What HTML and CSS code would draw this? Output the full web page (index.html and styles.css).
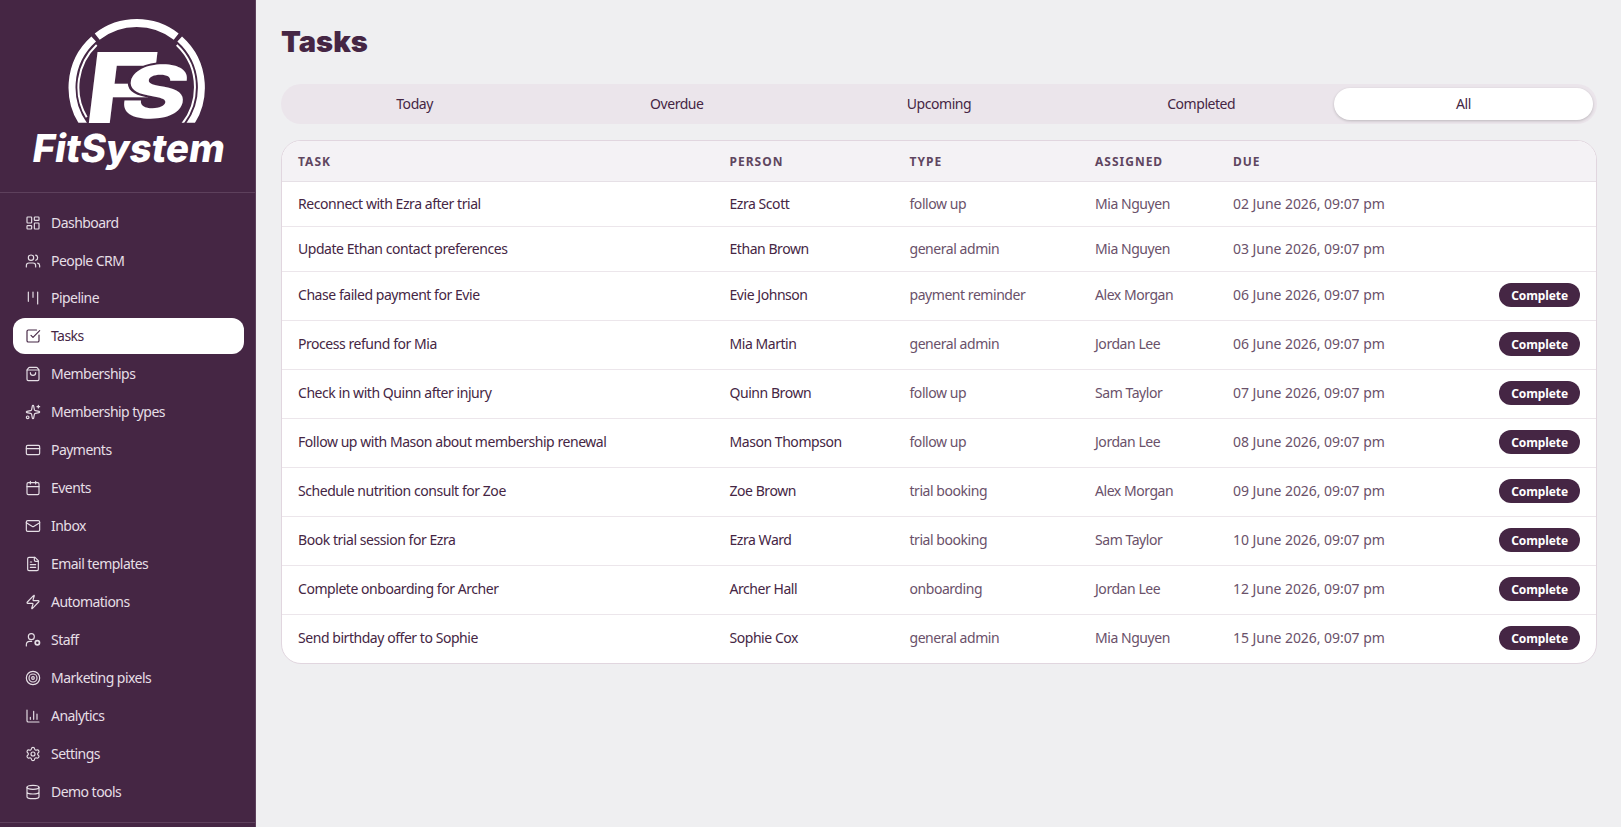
FILE: index.html
```html
<!DOCTYPE html>
<html lang="en">
<head>
    <meta charset="UTF-8">
    <meta name="viewport" content="width=device-width, initial-scale=1.0">
    <title>Tasks - FitSystem</title>
    <link rel="stylesheet" href="styles.css">
</head>
<body>
    <div class="app">
        <aside class="sidebar">
            <div class="brand">
                <svg class="logo" viewBox="0 0 255 192" role="img" aria-label="FitSystem">
                    <clipPath id="ring-cut"><rect x="0" y="0" width="255" height="122.7"/></clipPath>
                    <g clip-path="url(#ring-cut)" fill="none" stroke="#fff">
                        <path stroke-width="8" d="M97.2 36.6A64.3 64.3 0 0 1 176.2 36.6"/>
                        <path stroke-width="7" d="M93.7 39A64.7 64.7 0 0 0 87.5 129.3M179.7 39A64.7 64.7 0 0 1 185.9 129.3"/>
                        <path stroke-width="2" d="M96.7 44.9A58.3 58.3 0 0 0 86.7 117.3M176.7 44.9A58.3 58.3 0 0 1 177.1 129.3"/>
                    </g>
                    <text class="logo-f" transform="translate(82 122.5) skewX(-7) scale(1.24 1)">F</text>
                    <text class="logo-s" transform="translate(117 117.5) skewX(-13) scale(1.36 1)">S</text>
                    <text class="logo-name" transform="translate(31 162) skewX(-9)" x="0" y="0" textLength="192" lengthAdjust="spacingAndGlyphs">FitSystem</text>
                </svg>
            </div>
            <nav class="nav">
                <a class="nav-item"><svg class="icon" viewBox="0 0 24 24"><rect width="7" height="9" x="3" y="3" rx="1"/><rect width="7" height="5" x="14" y="3" rx="1"/><rect width="7" height="9" x="14" y="12" rx="1"/><rect width="7" height="5" x="3" y="16" rx="1"/></svg>Dashboard</a>
                <a class="nav-item"><svg class="icon" viewBox="0 0 24 24"><path d="M16 21v-2a4 4 0 0 0-4-4H6a4 4 0 0 0-4 4v2"/><circle cx="9" cy="7" r="4"/><path d="M22 21v-2a4 4 0 0 0-3-3.87M16 3.13a4 4 0 0 1 0 7.75"/></svg>People CRM</a>
                <a class="nav-item"><svg class="icon" viewBox="0 0 24 24"><path d="M5 3v14M12 3v8M19 3v18"/></svg>Pipeline</a>
                <a class="nav-item active"><svg class="icon" viewBox="0 0 24 24"><path d="M21 10.656V19a2 2 0 0 1-2 2H5a2 2 0 0 1-2-2V5a2 2 0 0 1 2-2h12.344"/><path d="m9 11 3 3L22 4"/></svg>Tasks</a>
                <a class="nav-item"><svg class="icon" viewBox="0 0 24 24"><path d="M16 10a4 4 0 0 1-8 0M3.103 6.034h17.794"/><path d="M3.4 5.467a2 2 0 0 0-.4 1.2V20a2 2 0 0 0 2 2h14a2 2 0 0 0 2-2V6.667a2 2 0 0 0-.4-1.2l-2-2.667A2 2 0 0 0 17 2H7a2 2 0 0 0-1.6.8z"/></svg>Memberships</a>
                <a class="nav-item"><svg class="icon" viewBox="0 0 24 24"><path d="M11.017 2.814a1 1 0 0 1 1.966 0l1.051 5.558a2 2 0 0 0 1.594 1.594l5.558 1.051a1 1 0 0 1 0 1.966l-5.558 1.051a2 2 0 0 0-1.594 1.594l-1.051 5.558a1 1 0 0 1-1.966 0l-1.051-5.558a2 2 0 0 0-1.594-1.594l-5.558-1.051a1 1 0 0 1 0-1.966l5.558-1.051a2 2 0 0 0 1.594-1.594z"/><path d="M20 2v4M22 4h-4"/><circle cx="4" cy="20" r="2"/></svg>Membership types</a>
                <a class="nav-item"><svg class="icon" viewBox="0 0 24 24"><rect width="20" height="14" x="2" y="5" rx="2"/><path d="M2 10h20"/></svg>Payments</a>
                <a class="nav-item"><svg class="icon" viewBox="0 0 24 24"><path d="M8 2v4M16 2v4"/><rect width="18" height="18" x="3" y="4" rx="2"/><path d="M3 10h18"/></svg>Events</a>
                <a class="nav-item"><svg class="icon" viewBox="0 0 24 24"><path d="m22 7-8.991 5.727a2 2 0 0 1-2.009 0L2 7"/><rect width="20" height="16" x="2" y="4" rx="2"/></svg>Inbox</a>
                <a class="nav-item"><svg class="icon" viewBox="0 0 24 24"><path d="M15 2H6a2 2 0 0 0-2 2v16a2 2 0 0 0 2 2h12a2 2 0 0 0 2-2V7z"/><path d="M14 2v4a2 2 0 0 0 2 2h4M10 9H8M16 13H8M16 17H8"/></svg>Email templates</a>
                <a class="nav-item"><svg class="icon" viewBox="0 0 24 24"><path d="M4 14a1 1 0 0 1-.78-1.63l9.9-10.2a.5.5 0 0 1 .86.46l-1.92 6.02A1 1 0 0 0 13 10h7a1 1 0 0 1 .78 1.63l-9.9 10.2a.5.5 0 0 1-.86-.46l1.92-6.02A1 1 0 0 0 11 14z"/></svg>Automations</a>
                <a class="nav-item"><svg class="icon" viewBox="0 0 24 24"><path d="M2 21v-2a5 5 0 0 1 5-5h3"/><circle cx="9.5" cy="7" r="4.5"/><circle cx="18.5" cy="16" r="3.2" stroke-width="2.6"/></svg>Staff</a>
                <a class="nav-item"><svg class="icon" viewBox="0 0 24 24"><circle cx="12" cy="12" r="10"/><circle cx="12" cy="12" r="6"/><circle cx="12" cy="12" r="2"/></svg>Marketing pixels</a>
                <a class="nav-item"><svg class="icon" viewBox="0 0 24 24"><path d="M3 3v16a2 2 0 0 0 2 2h16M18 17V9M13 17V5M8 17v-3"/></svg>Analytics</a>
                <a class="nav-item"><svg class="icon" viewBox="0 0 24 24"><path d="M9.671 4.136a2.34 2.34 0 0 1 4.659 0 2.34 2.34 0 0 0 3.319 1.915 2.34 2.34 0 0 1 2.33 4.033 2.34 2.34 0 0 0 0 3.831 2.34 2.34 0 0 1-2.33 4.033 2.34 2.34 0 0 0-3.319 1.915 2.34 2.34 0 0 1-4.659 0 2.34 2.34 0 0 0-3.32-1.915 2.34 2.34 0 0 1-2.33-4.033 2.34 2.34 0 0 0 0-3.831A2.34 2.34 0 0 1 6.35 6.051a2.34 2.34 0 0 0 3.319-1.915"/><circle cx="12" cy="12" r="3"/></svg>Settings</a>
                <a class="nav-item"><svg class="icon" viewBox="0 0 24 24"><ellipse cx="12" cy="5" rx="9" ry="3"/><path d="M3 5v14a9 3 0 0 0 18 0V5M3 12a9 3 0 0 0 18 0"/></svg>Demo tools</a>
            </nav>
            <div class="sidebar-footer"></div>
        </aside>

        <main class="main">
            <h1>Tasks</h1>
            <div class="tabs">
                <a class="tab">Today</a>
                <a class="tab">Overdue</a>
                <a class="tab">Upcoming</a>
                <a class="tab">Completed</a>
                <a class="tab active">All</a>
            </div>
            <div class="card">
                <table class="tasks">
                    <colgroup>
                        <col class="col-task">
                        <col class="col-person">
                        <col class="col-type">
                        <col class="col-assigned">
                        <col>
                        <col class="col-action">
                    </colgroup>
                    <thead>
                        <tr><th>Task</th><th>Person</th><th>Type</th><th>Assigned</th><th>Due</th><th></th></tr>
                    </thead>
                    <tbody>
                        <tr class="done"><td>Reconnect with Ezra after trial</td><td>Ezra Scott</td><td class="muted">follow up</td><td class="muted">Mia Nguyen</td><td class="muted date">02 June 2026, 09:07 pm</td><td></td></tr>
                        <tr class="done"><td>Update Ethan contact preferences</td><td>Ethan Brown</td><td class="muted">general admin</td><td class="muted">Mia Nguyen</td><td class="muted date">03 June 2026, 09:07 pm</td><td></td></tr>
                        <tr><td>Chase failed payment for Evie</td><td>Evie Johnson</td><td class="muted">payment reminder</td><td class="muted">Alex Morgan</td><td class="muted date">06 June 2026, 09:07 pm</td><td><button class="btn">Complete</button></td></tr>
                        <tr><td>Process refund for Mia</td><td>Mia Martin</td><td class="muted">general admin</td><td class="muted">Jordan Lee</td><td class="muted date">06 June 2026, 09:07 pm</td><td><button class="btn">Complete</button></td></tr>
                        <tr><td>Check in with Quinn after injury</td><td>Quinn Brown</td><td class="muted">follow up</td><td class="muted">Sam Taylor</td><td class="muted date">07 June 2026, 09:07 pm</td><td><button class="btn">Complete</button></td></tr>
                        <tr><td>Follow up with Mason about membership renewal</td><td>Mason Thompson</td><td class="muted">follow up</td><td class="muted">Jordan Lee</td><td class="muted date">08 June 2026, 09:07 pm</td><td><button class="btn">Complete</button></td></tr>
                        <tr><td>Schedule nutrition consult for Zoe</td><td>Zoe Brown</td><td class="muted">trial booking</td><td class="muted">Alex Morgan</td><td class="muted date">09 June 2026, 09:07 pm</td><td><button class="btn">Complete</button></td></tr>
                        <tr><td>Book trial session for Ezra</td><td>Ezra Ward</td><td class="muted">trial booking</td><td class="muted">Sam Taylor</td><td class="muted date">10 June 2026, 09:07 pm</td><td><button class="btn">Complete</button></td></tr>
                        <tr><td>Complete onboarding for Archer</td><td>Archer Hall</td><td class="muted">onboarding</td><td class="muted">Jordan Lee</td><td class="muted date">12 June 2026, 09:07 pm</td><td><button class="btn">Complete</button></td></tr>
                        <tr><td>Send birthday offer to Sophie</td><td>Sophie Cox</td><td class="muted">general admin</td><td class="muted">Mia Nguyen</td><td class="muted date">15 June 2026, 09:07 pm</td><td><button class="btn">Complete</button></td></tr>
                    </tbody>
                </table>
            </div>
        </main>
    </div>
</body>
</html>
```
FILE: styles.css
```css
* {
    box-sizing: border-box;
}
body {
    margin: 0;
    font-family: "Noto Sans", sans-serif;
    font-size: 14px;
    line-height: 20px;
    letter-spacing: -0.45px;
    color: #452644;
    background-color: #efeff1;
}
.app {
    display: flex;
    height: 100vh;
    overflow: hidden;
}

/* sidebar */
.sidebar {
    display: flex;
    flex-direction: column;
    flex: none;
    width: 256px;
    background-color: #452644;
    border-right: 1px solid #5d405c;
}
.brand {
    height: 193px;
    border-bottom: 1px solid #5d405c;
}
.logo {
    display: block;
    width: 255px;
    height: 192px;
    fill: #fff;
    letter-spacing: 0;
}
.logo-f,
.logo-s {
    font-family: Inter, sans-serif;
    font-weight: 800;
    font-size: 97.7px;
}
.logo-s {
    font-size: 73px;
    stroke: #452644;
    stroke-width: 4px;
    paint-order: stroke;
}
.logo-name {
    font-family: Inter, sans-serif;
    font-weight: 800;
    font-size: 38.5px;
}
.nav {
    display: flex;
    flex-direction: column;
    gap: 1.95px;
    height: 629px;
    padding: 11.6px 11px 0 13px;
}
.nav-item {
    display: flex;
    flex: none;
    align-items: center;
    gap: 10px;
    height: 36px;
    padding: 0 12px;
    border-radius: 12px;
    color: #e6dfe6;
    letter-spacing: -0.54px;
}
.nav-item.active {
    background-color: #fff;
    color: #452644;
}
.icon {
    width: 16px;
    height: 16px;
    fill: none;
    stroke: currentColor;
    stroke-width: 1.75;
    stroke-linecap: round;
    stroke-linejoin: round;
}
.sidebar-footer {
    border-top: 1px solid #5d405c;
}

/* content */
.main {
    flex: 1;
    padding: 24px 24px 24px 25px;
}
h1 {
    margin: 0 0 24px;
    font-family: Inter, sans-serif;
    font-size: 29px;
    font-weight: 900;
    line-height: 36px;
    letter-spacing: 0;
}
.tabs {
    display: grid;
    grid-template-columns: repeat(5, 1fr);
    gap: 3px;
    padding: 4px;
    border-radius: 20px;
    background-color: #ebe5eb;
}
.tab {
    height: 32px;
    line-height: 32px;
    border-radius: 16px;
    text-align: center;
}
.tab.active {
    background-color: #fff;
    box-shadow: 0 1px 3px rgba(0, 0, 0, 0.2);
}
.card {
    margin-top: 16px;
    border: 1px solid #e1d6df;
    border-radius: 20px;
    background-color: #fff;
    overflow: hidden;
}
.tasks {
    width: 100%;
    table-layout: fixed;
    border-collapse: separate;
    border-spacing: 0;
}
.col-task {
    width: 431.5px;
}
.col-person {
    width: 180px;
}
.col-type {
    width: 185.5px;
}
.col-assigned {
    width: 138px;
}
.col-action {
    width: 130px;
}
th,
td {
    padding: 0 16px;
    border-bottom: 1px solid #ece6eb;
    text-align: left;
    white-space: nowrap;
}
th {
    height: 41px;
    padding-top: 2px;
    background-color: #f4f2f5;
    color: #5f4660;
    font-size: 12px;
    font-weight: 700;
    letter-spacing: 1px;
    text-transform: uppercase;
}
td {
    height: 49px;
    padding-bottom: 2px;
}
.done td {
    height: 45px;
    padding-bottom: 0;
}
tr:last-child td {
    height: 48px;
    border-bottom: none;
}
thead tr th {
    border-bottom: 1px solid #e6e0e6;
}
.muted {
    color: #6a516a;
}
.date {
    letter-spacing: -0.05px;
}
td:last-child {
    text-align: right;
}
.btn {
    height: 24px;
    padding: 0 12px;
    border: none;
    border-radius: 12px;
    background-color: #452644;
    color: #fff;
    font-family: inherit;
    font-size: 12px;
    font-weight: 700;
    letter-spacing: -0.1px;
    vertical-align: middle;
}
```
